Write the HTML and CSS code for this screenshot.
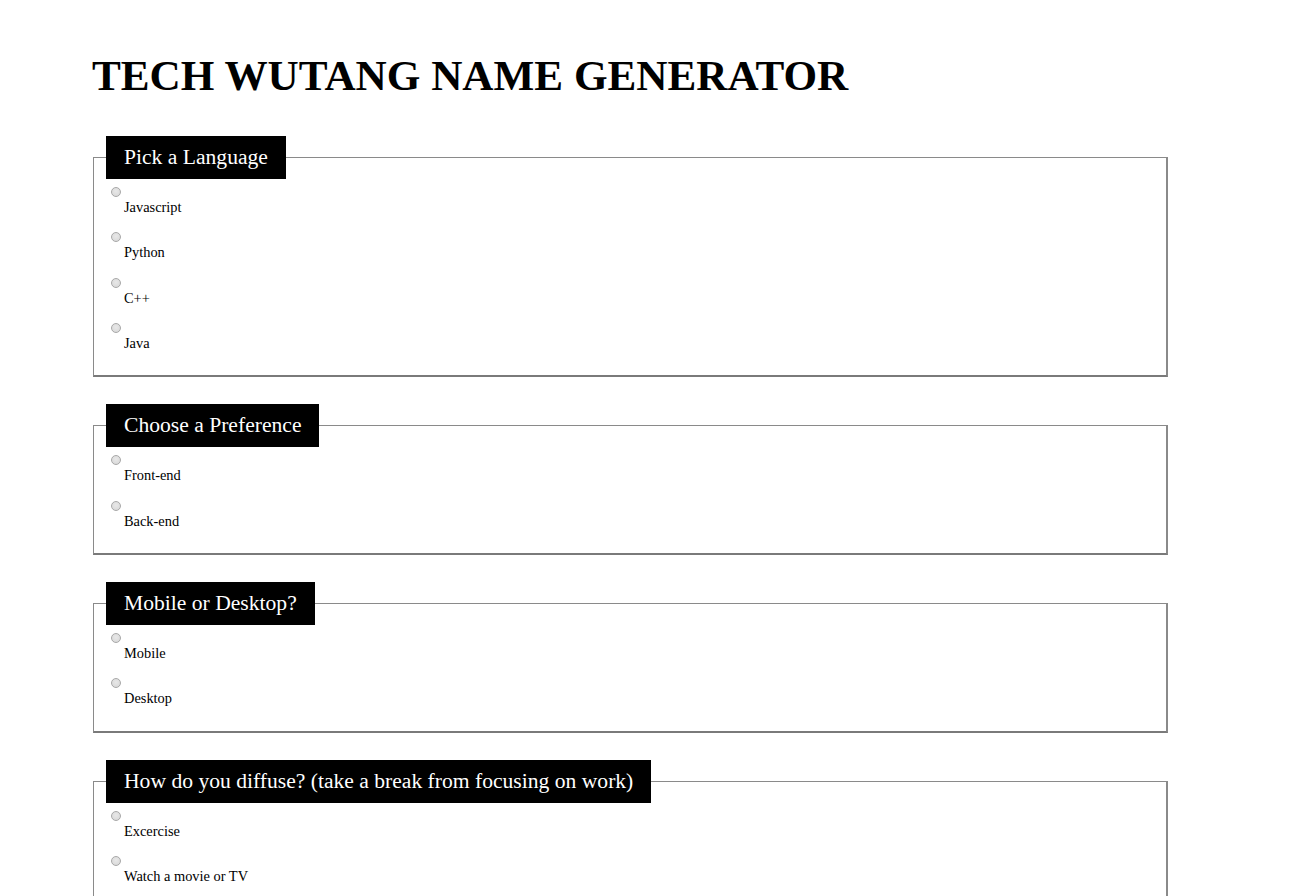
FILE: index.html
```html
<!DOCTYPE html>
<html>
<head>
<meta charset="utf-8">
<title>Tech Wutang Name Generator</title>
<link rel="stylesheet" href="styles.css">
</head>
<body>
<div class="page">
  <h1 class="title">TECH WUTANG NAME GENERATOR</h1>
  <form class="form">
    <fieldset class="group">
      <legend class="group-legend">Pick a Language</legend>
      <div class="option"><input class="radio" type="radio" name="lang" id="l1"><label class="option-label" for="l1">Javascript</label></div>
      <div class="option"><input class="radio" type="radio" name="lang" id="l2"><label class="option-label" for="l2">Python</label></div>
      <div class="option"><input class="radio" type="radio" name="lang" id="l3"><label class="option-label" for="l3">C++</label></div>
      <div class="option"><input class="radio" type="radio" name="lang" id="l4"><label class="option-label" for="l4">Java</label></div>
    </fieldset>
    <fieldset class="group">
      <legend class="group-legend">Choose a Preference</legend>
      <div class="option"><input class="radio" type="radio" name="pref" id="p1"><label class="option-label" for="p1">Front-end</label></div>
      <div class="option"><input class="radio" type="radio" name="pref" id="p2"><label class="option-label" for="p2">Back-end</label></div>
    </fieldset>
    <fieldset class="group">
      <legend class="group-legend">Mobile or Desktop?</legend>
      <div class="option"><input class="radio" type="radio" name="dev" id="d1"><label class="option-label" for="d1">Mobile</label></div>
      <div class="option"><input class="radio" type="radio" name="dev" id="d2"><label class="option-label" for="d2">Desktop</label></div>
    </fieldset>
    <fieldset class="group">
      <legend class="group-legend">How do you diffuse? (take a break from focusing on work)</legend>
      <div class="option"><input class="radio" type="radio" name="diff" id="f1"><label class="option-label" for="f1">Excercise</label></div>
      <div class="option"><input class="radio" type="radio" name="diff" id="f2"><label class="option-label" for="f2">Watch a movie or TV</label></div>
      <div class="option"><input class="radio" type="radio" name="diff" id="f3"><label class="option-label" for="f3">Read a book</label></div>
    </fieldset>
  </form>
</div>
</body>
</html>
```
FILE: styles.css
```css
html, body {
  margin: 0;
  padding: 0;
  background: #ffffff;
}

body {
  font-family: "Liberation Serif", "Times New Roman", serif;
  color: #000000;
}

.page {
  padding: 0 124px 0 93px;
}

.title {
  font-size: 43.2px;
  font-weight: bold;
  margin: 0 0 0 -1px;
  padding-top: 52px;
  line-height: 48px;
}

.form {
  padding-top: 36px;
}

.group {
  margin: 0 0 27px 0;
  padding: 0 12px 15px 12px;
  border-style: solid;
  border-width: 1px 2px 2px 1px;
  border-color: #8a8a8a #8a8a8a #7a7a7a #8a8a8a;
  font-size: 14.4px;
}

.group-legend {
  background: #000000;
  color: #ffffff;
  font-size: 21.6px;
  line-height: 23px;
  padding: 10px 18px;
  margin: 0;
}

.option {
  display: block;
  padding-top: 8px;
  height: 37.33px;
}

.radio {
  display: block;
  appearance: none;
  -webkit-appearance: none;
  width: 10px;
  height: 10px;
  margin: 0 0 0 5px;
  border-radius: 50%;
  border: 1px solid #a8a8a8;
  background: radial-gradient(circle at 50% 40%, #e8e8e8 0%, #d6d6d6 100%);
  box-sizing: border-box;
}

.option-label {
  display: block;
  margin-left: 18px;
  margin-top: 1px;
  line-height: 18px;
}
```
